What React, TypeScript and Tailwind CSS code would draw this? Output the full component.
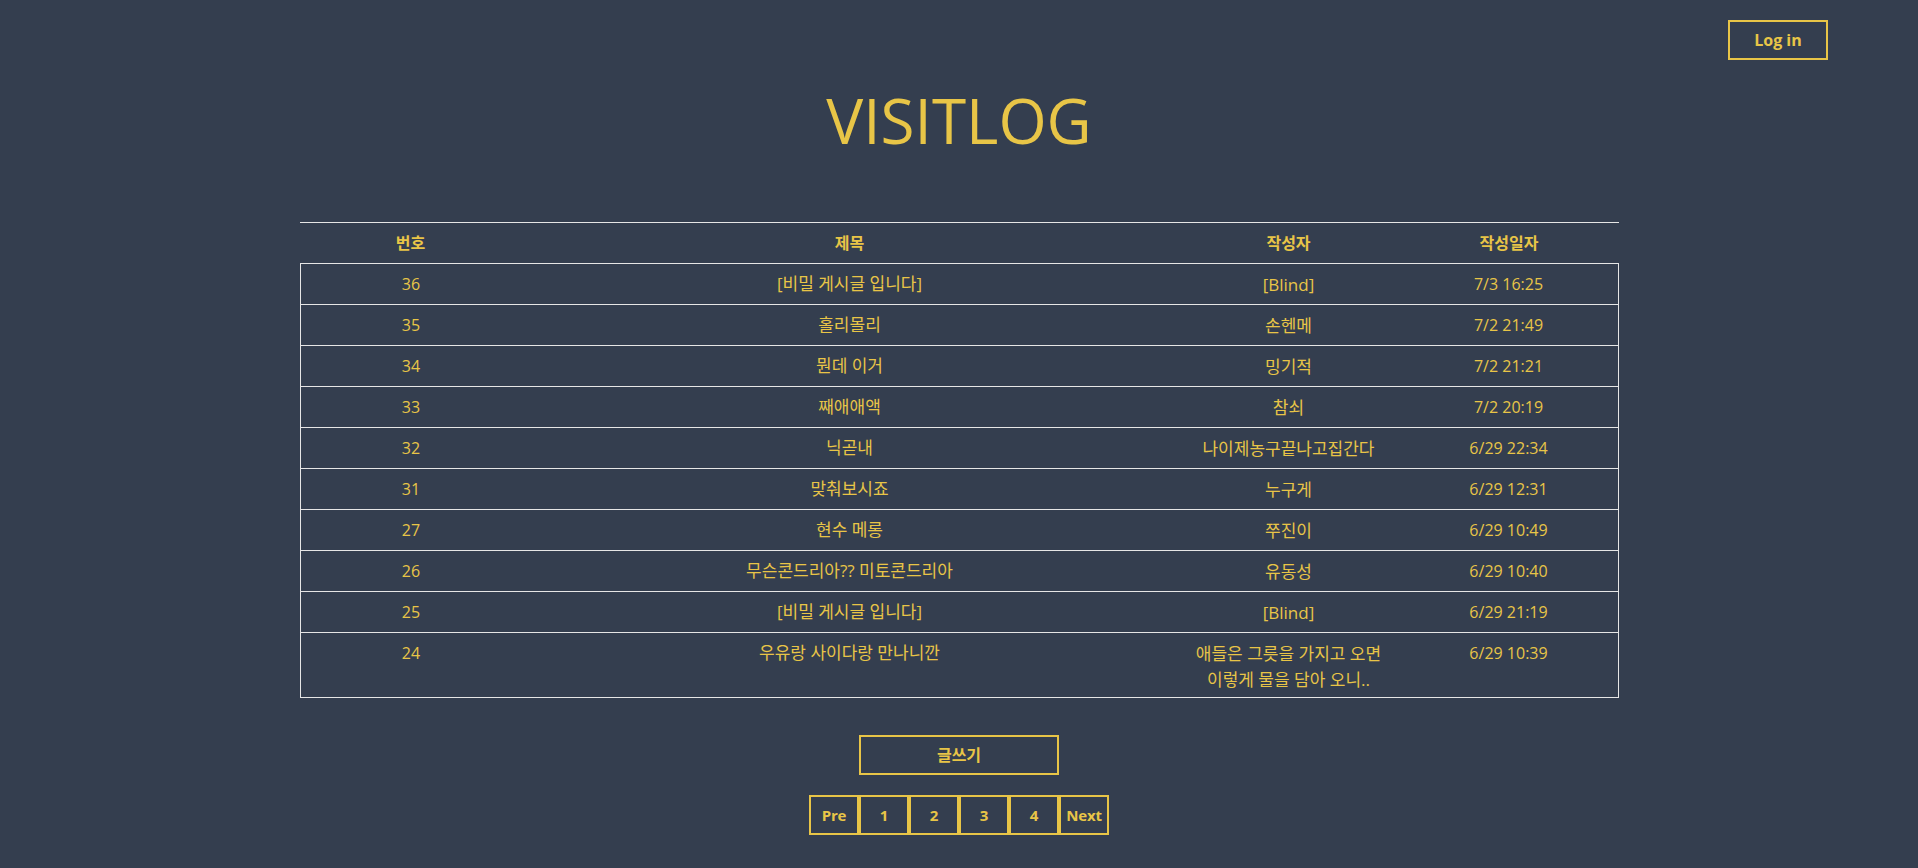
import React from 'react';

const POSTS = [
  { no: 36, title: '[비밀 게시글 입니다]', writer: '[Blind]', date: '7/3 16:25' },
  { no: 35, title: '홀리몰리', writer: '손헨메', date: '7/2 21:49' },
  { no: 34, title: '뭔데 이거', writer: '밍기적', date: '7/2 21:21' },
  { no: 33, title: '째애애액', writer: '참쇠', date: '7/2 20:19' },
  { no: 32, title: '닉곧내', writer: '나이제농구끝나고집간다', date: '6/29 22:34' },
  { no: 31, title: '맞춰보시죠', writer: '누구게', date: '6/29 12:31' },
  { no: 27, title: '현수 메롱', writer: '쭈진이', date: '6/29 10:49' },
  { no: 26, title: '무슨콘드리아?? 미토콘드리아', writer: '유동성', date: '6/29 10:40' },
  { no: 25, title: '[비밀 게시글 입니다]', writer: '[Blind]', date: '6/29 21:19' },
  { no: 24, title: '우유랑 사이다랑 만나니깐', writer: '애들은 그릇을 가지고 오면 이렇게 물을 담아 오니..', date: '6/29 10:39', tall: true },
];

const PAGES = ['Pre', '1', '2', '3', '4', 'Next'];

const App = () => {
  return (
    <div
      className="min-h-[868px] bg-[#343e4f] text-[#e8c547]"
      style={{ fontFamily: '"Open Sans", "Noto Sans CJK KR", sans-serif' }}
    >
      <header className="flex justify-end pt-5 pr-[90px]">
        <button className="h-10 w-[100px] border-2 border-[#e8c547] text-[16px] font-bold">
          Log in
        </button>
      </header>

      <h1 className="mt-[25px] text-center text-[62px] leading-[70px] font-normal">VISITLOG</h1>

      {/* board */}
      <div className="mx-auto mt-[67px] w-[1319px]">
        <div className="grid h-[41px] grid-cols-[222px_656px_222px_219px] items-center border-t border-[#e6e6e6] text-center text-[16px] font-bold">
          <div>번호</div>
          <div>제목</div>
          <div>작성자</div>
          <div>작성일자</div>
        </div>
        <div className="border-x border-t border-[#e6e6e6]">
          {POSTS.map(post => (
            <div
              key={post.no}
              className={`grid grid-cols-[221px_656px_222px_218px] border-b border-[#e6e6e6] pt-2 text-center leading-6 ${post.tall ? 'h-[65px]' : 'h-[41px]'}`}
            >
              <div className="text-[16px]">{post.no}</div>
              <div className="text-[17px]">{post.title}</div>
              <div className="px-3 text-[17px] leading-[26px]">{post.writer}</div>
              <div className="text-[16px]">{post.date}</div>
            </div>
          ))}
        </div>
      </div>

      <div className="mt-[37px] flex flex-col items-center">
        <button className="h-10 w-[200px] border-2 border-[#e8c547] text-[16px] font-bold">글쓰기</button>
        <div className="mt-5 flex">
          {PAGES.map(page => (
            <button key={page} className="h-10 w-[50px] border-2 border-[#e8c547] text-[15px] font-bold tracking-[-0.2px]">
              {page}
            </button>
          ))}
        </div>
      </div>
    </div>
  );
};

export default App;
